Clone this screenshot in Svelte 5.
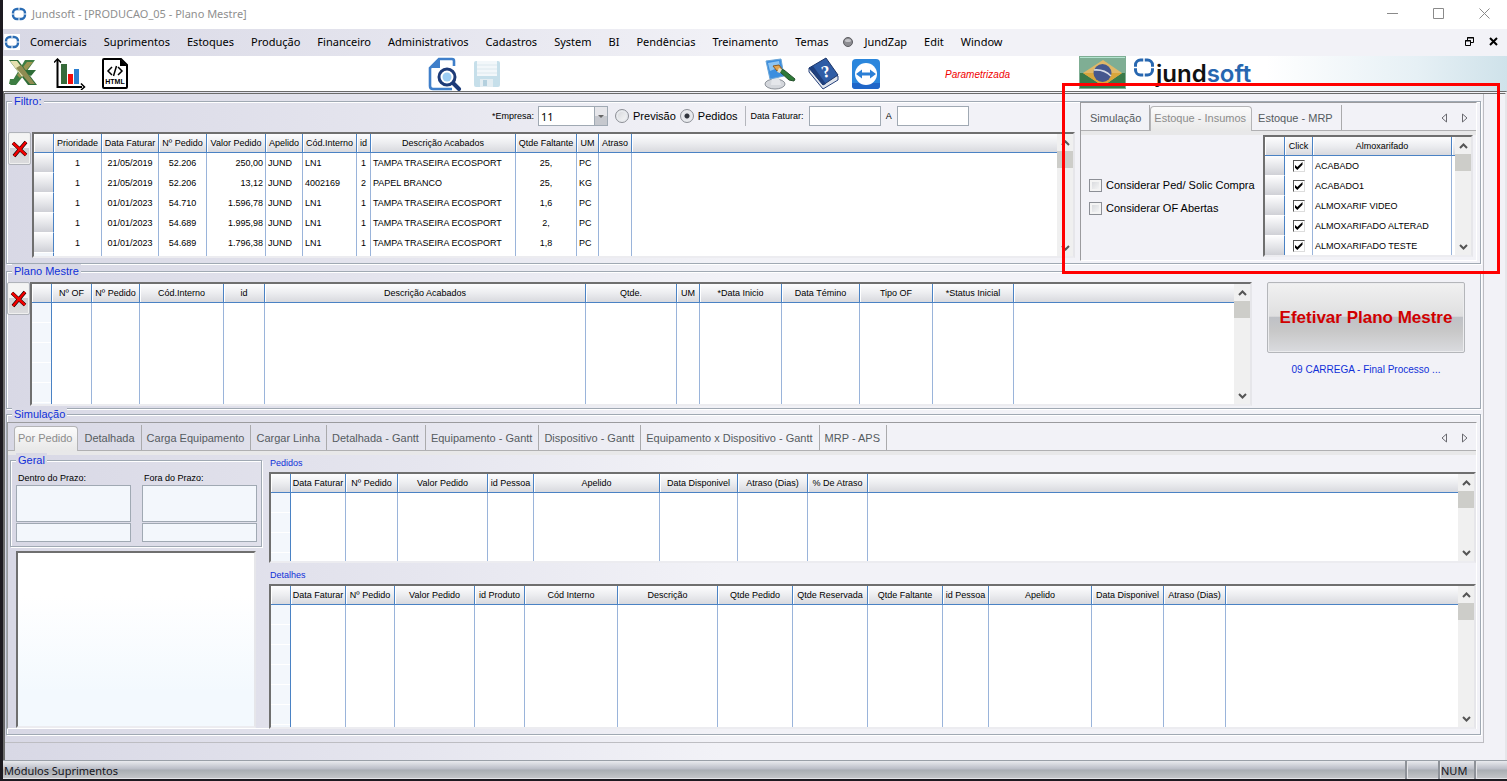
<script lang="ts">
  type Column = { label: string; width: number; align?: 'left' | 'center' | 'right' };

  const menus = [
    'Comerciais', 'Suprimentos', 'Estoques', 'Produção', 'Financeiro', 'Administrativos',
    'Cadastros', 'System', 'BI', 'Pendências', 'Treinamento', 'Temas', 'JundZap', 'Edit', 'Window'
  ];

  const filterTabs = ['Simulação', 'Estoque - Insumos', 'Estoque - MRP'];
  const simulationTabs = [
    'Por Pedido', 'Detalhada', 'Carga Equipamento', 'Cargar Linha', 'Detalhada - Gantt',
    'Equipamento - Gantt', 'Dispositivo - Gantt', 'Equipamento x Dispositivo - Gantt', 'MRP - APS'
  ];

  let filterTab = $state('Estoque - Insumos');
  let simulationTab = $state('Por Pedido');
  let orderKind = $state('pedidos');

  const orderColumns: Column[] = [
    { label: 'Prioridade', width: 48, align: 'center' },
    { label: 'Data Faturar', width: 57, align: 'center' },
    { label: 'Nº Pedido', width: 48, align: 'center' },
    { label: 'Valor Pedido', width: 59, align: 'right' },
    { label: 'Apelido', width: 37 },
    { label: 'Cód.Interno', width: 54 },
    { label: 'id', width: 14, align: 'center' },
    { label: 'Descrição Acabados', width: 145 },
    { label: 'Qtde Faltante', width: 61, align: 'center' },
    { label: 'UM', width: 22 },
    { label: 'Atraso', width: 33 }
  ];
  const orders = [
    ['1', '21/05/2019', '52.206', '250,00', 'JUND', 'LN1', '1', 'TAMPA TRASEIRA ECOSPORT', '25,', 'PC', ''],
    ['1', '21/05/2019', '52.206', '13,12', 'JUND', '4002169', '2', 'PAPEL BRANCO', '25,', 'KG', ''],
    ['1', '01/01/2023', '54.710', '1.596,78', 'JUND', 'LN1', '1', 'TAMPA TRASEIRA ECOSPORT', '1,6', 'PC', ''],
    ['1', '01/01/2023', '54.689', '1.995,98', 'JUND', 'LN1', '1', 'TAMPA TRASEIRA ECOSPORT', '2,', 'PC', ''],
    ['1', '01/01/2023', '54.689', '1.796,38', 'JUND', 'LN1', '1', 'TAMPA TRASEIRA ECOSPORT', '1,8', 'PC', '']
  ];

  const planColumns: Column[] = [
    { label: 'Nº OF', width: 40 },
    { label: 'Nº Pedido', width: 48 },
    { label: 'Cód.Interno', width: 84 },
    { label: 'id', width: 41 },
    { label: 'Descrição Acabados', width: 321 },
    { label: 'Qtde.', width: 91 },
    { label: 'UM', width: 23 },
    { label: '*Data Inicio', width: 82 },
    { label: 'Data Témino', width: 78 },
    { label: 'Tipo OF', width: 73 },
    { label: '*Status Inicial', width: 81 }
  ];

  const pedidosColumns: Column[] = [
    { label: 'Data Faturar', width: 55 },
    { label: 'Nº Pedido', width: 52 },
    { label: 'Valor Pedido', width: 90 },
    { label: 'id Pessoa', width: 46 },
    { label: 'Apelido', width: 126 },
    { label: 'Data Disponivel', width: 78 },
    { label: 'Atraso (Dias)', width: 70 },
    { label: '% De Atraso', width: 60 }
  ];

  const detalhesColumns: Column[] = [
    { label: 'Data Faturar', width: 55 },
    { label: 'Nº Pedido', width: 49 },
    { label: 'Valor Pedido', width: 80 },
    { label: 'id Produto', width: 50 },
    { label: 'Cód Interno', width: 93 },
    { label: 'Descrição', width: 100 },
    { label: 'Qtde Pedido', width: 75 },
    { label: 'Qtde Reservada', width: 75 },
    { label: 'Qtde Faltante', width: 75 },
    { label: 'id Pessoa', width: 46 },
    { label: 'Apelido', width: 103 },
    { label: 'Data Disponivel', width: 72 },
    { label: 'Atraso (Dias)', width: 62 }
  ];

  let warehouses = $state([
    { name: 'ACABADO', checked: true },
    { name: 'ACABADO1', checked: true },
    { name: 'ALMOXARIF VIDEO', checked: true },
    { name: 'ALMOXARIFADO ALTERAD', checked: true },
    { name: 'ALMOXARIFADO TESTE', checked: true }
  ]);
</script>

{#snippet ring(size: number)}
  <svg width={size} height={size} viewBox="0 0 16 16" aria-hidden="true">
    <rect x="2" y="3" width="12" height="10" rx="4" fill="none" stroke="#2a6cb4" stroke-width="2.4" />
    <path d="M8 1v3M8 12v3M0 8h3M13 8h3" stroke="#fff" stroke-width="1" />
  </svg>
{/snippet}

{#snippet scrollbar()}
  <div class="scrollbar">
    <button aria-label="Subir">
      <svg width="9" height="6" viewBox="0 0 9 6"><path d="M1 5l3.500-3.500L8 5" /></svg>
    </button>
    <div class="thumb"></div>
    <button aria-label="Descer">
      <svg width="9" height="6" viewBox="0 0 9 6"><path d="M1 1l3.500 3.500L8 1" /></svg>
    </button>
  </div>
{/snippet}

{#snippet grid(name: string, columns: Column[], rows: string[][])}
  <div class="grid {name}">
    <div class="viewport">
      <table aria-label={name}>
        <colgroup>
          <col class="selector" />
          {#each columns as column}
            <col style="width: {column.width}px" />
          {/each}
          <col />
        </colgroup>
        <thead>
          <tr>
            <th class="corner"></th>
            {#each columns as column}
              <th>{column.label}</th>
            {/each}
            <th class="rest"></th>
          </tr>
        </thead>
        <tbody>
          {#each rows as row}
            <tr>
              <th class="handle"></th>
              {#each row as cell, i}
                <td class={columns[i].align ?? 'left'}>{cell}</td>
              {/each}
              <td class="rest"></td>
            </tr>
          {/each}
          <tr class="blank">
            <td class="gutter"></td>
            {#each columns as _}
              <td></td>
            {/each}
            <td class="rest"></td>
          </tr>
        </tbody>
      </table>
    </div>
    {@render scrollbar()}
  </div>
{/snippet}

{#snippet deleteButton()}
  <button class="delete" aria-label="Excluir">
    <svg width="18" height="18" viewBox="0 0 18 18">
      <path d="M2 3l13 12M15 2L3 16" stroke="#000" stroke-width="3.600" />
      <path d="M2 3l13 12M15 2L3 16" stroke="#f20000" stroke-width="2.600" />
    </svg>
  </button>
{/snippet}

{#snippet tabArrows()}
  <div class="tab-arrows">
    <button aria-label="Aba anterior"><svg width="7" height="10" viewBox="0 0 7 10"><path d="M5.500 1v8L1 5z" /></svg></button>
    <button aria-label="Próxima aba"><svg width="7" height="10" viewBox="0 0 7 10"><path d="M1.500 1v8L6 5z" /></svg></button>
  </div>
{/snippet}

<div class="desktop">
  <div class="window">
    <header class="titlebar">
      {@render ring(16)}
      <h1>Jundsoft - [PRODUCAO_05 - Plano Mestre]</h1>
      <div class="window-buttons">
        <button aria-label="Minimizar"><svg width="11" height="11" viewBox="0 0 11 11"><path d="M0 5.500h11" /></svg></button>
        <button aria-label="Maximizar"><svg width="11" height="11" viewBox="0 0 11 11"><path d="M.5.500h10v10H.5z" /></svg></button>
        <button aria-label="Fechar"><svg width="11" height="11" viewBox="0 0 11 11"><path d="M.5.500l10 10M10.500.500l-10 10" /></svg></button>
      </div>
    </header>

    <nav class="menubar">
      <span class="menu-logo">{@render ring(16)}</span>
      {#each menus as menu}
        {#if menu === 'JundZap'}
          <svg class="dot" width="12" height="12" viewBox="0 0 12 12" aria-hidden="true">
            <circle cx="6" cy="6" r="4.500" fill="#8d8d92" stroke="#5d5d62" />
            <ellipse cx="6" cy="4.500" rx="3" ry="1.600" fill="#c4c4c8" />
          </svg>
        {/if}
        <button class="menu">{menu}</button>
      {/each}
      <div class="mdi-buttons">
        <button aria-label="Restaurar">
          <svg width="9" height="9" viewBox="0 0 9 9"><path d="M2.500 3V.5h6v5H6M2 1h7M.5 3.500h5v5h-5zM0 4h6" /></svg>
        </button>
        <button aria-label="Fechar janela">
          <svg width="9" height="9" viewBox="0 0 9 9"><path d="M1 1l7 7M8 1L1 8" stroke-width="2" /></svg>
        </button>
      </div>
    </nav>

    <div class="toolbar">
      <div class="tools reports">
        <button aria-label="Excel">
          <svg width="30" height="30" viewBox="0 0 30 30">
            <path d="M17 1h10L16 16 8 26H2z" fill="#3d7d42" />
            <path d="M19 3h6L12 19l-3-3z" fill="#9b9450" />
            <path d="M12 11l16 0-5 6z" fill="#2f6d38" />
            <path d="M1 1h9l19 25h-9z" fill="#2f6d38" />
            <path d="M2 2h7l9 12-4 4z" fill="#e5e0b0" />
            <path d="M8 9l5-3 14 19h-5z" fill="#8f8c52" />
            <path d="M2 20h9l-3 5H1z" fill="#3d7d42" />
          </svg>
        </button>
        <button aria-label="Gráfico">
          <svg width="32" height="32" viewBox="0 0 32 32">
            <path d="M7 6h6v20H7z" fill="#376b3a" />
            <path d="M14 16h5v10h-5z" fill="#f20c0c" />
            <path d="M20 11h5v15h-5z" fill="#2c7fd0" />
            <path d="M3.500 2v27H28" fill="none" stroke="#000" stroke-width="2" />
            <path d="M0 4.500L3.500 1 7 4.500M27 25.500l3.500 3.500-3.500 3" fill="none" stroke="#000" stroke-width="1.500" />
          </svg>
        </button>
        <button aria-label="HTML">
          <svg width="26" height="32" viewBox="0 0 26 32">
            <path d="M2 1h17l6 6v22a1 1 0 0 1-1 1H2a1 1 0 0 1-1-1V2a1 1 0 0 1 1-1z" fill="#fff" stroke="#000" stroke-width="2" />
            <path d="M18 1v7h7z" />
            <path d="M10 9l-4 4 4 4M16 9l4 4-4 4M14.500 8l-3 10" fill="none" stroke="#000" stroke-width="1.500" />
            <text x="13" y="26" text-anchor="middle" font-family="Liberation Sans, sans-serif" font-size="7" font-weight="700">HTML</text>
          </svg>
        </button>
      </div>
      <div class="tools record">
        <button aria-label="Pesquisar">
          <svg width="34" height="34" viewBox="0 0 34 34">
            <path d="M26 9V4q0-2-2-2H11L2 11v18q0 3 3 3h19" fill="none" stroke="#3f7fca" stroke-width="2.600" />
            <path d="M12 1v10H1z" fill="#3f7fca" />
            <path d="M25 26l6 6" stroke="#1d3b78" stroke-width="4" stroke-linecap="round" />
            <circle cx="19" cy="20" r="8" fill="#fff" stroke="#1d3b78" stroke-width="3" />
            <circle cx="19" cy="20" r="4.500" fill="#9ccdf4" />
          </svg>
        </button>
        <button aria-label="Salvar" disabled>
          <svg width="28" height="28" viewBox="0 0 28 28">
            <rect x="1" y="1" width="26" height="26" rx="2" fill="#c6dfea" />
            <path d="M4 1h20v15H4z" fill="#f2f7fa" />
            <path d="M4 5h20M4 9h20M4 13h20" stroke="#dce8ee" />
            <path d="M7 19h13v8H7z" fill="#e3edf2" />
            <path d="M10 20h4v6h-4z" fill="#b4d0de" />
          </svg>
        </button>
      </div>
      <div class="tools helpers">
        <button aria-label="Tema">
          <svg width="32" height="32" viewBox="0 0 32 32">
            <ellipse cx="11" cy="26" rx="10" ry="5" fill="#d4d7dc" stroke="#8c9199" />
            <path d="M8 19h7l2 8H7z" fill="#e4e6ea" />
            <path d="M2 3l15-2 3 17-14 3z" fill="#3c8ede" stroke="#6aa5d8" />
            <path d="M4 5l11-2 1 6-10 4z" fill="#8cc4f2" />
            <path d="M9 8l6-1 3 4-5 2z" fill="#e3a44e" stroke="#8b5a20" />
            <path d="M16 11l4 1 11 9-1 2-5-1-9-8z" fill="#2e7a38" stroke="#24502a" />
            <path d="M15 10l3 1-2 4-3-1z" fill="#e8dfc6" />
          </svg>
        </button>
        <button aria-label="Ajuda">
          <svg width="32" height="34" viewBox="0 0 32 34">
            <path d="M1 11v4l14 17 15-9v-4z" fill="#dfe4ec" stroke="#27427c" />
            <path d="M1 11L18 1l12 17-15 10z" fill="#2f5da6" stroke="#1b3468" />
            <path d="M1 11l4-2 13 18-3 1z" fill="#1e3f7d" />
            <text x="18" y="20" text-anchor="middle" transform="rotate(-14 18 15)" fill="#fff" font-family="Liberation Serif, serif" font-size="17" font-weight="700">?</text>
          </svg>
        </button>
        <button aria-label="Acesso remoto">
          <svg width="28" height="30" viewBox="0 0 28 30">
            <rect width="28" height="30" rx="4" fill="#2b86dc" />
            <path d="M0 24h28v3q0 3-3 3H3q-3 0-3-3z" fill="#1f66c8" />
            <circle cx="14" cy="15" r="11" fill="#fff" />
            <path d="M4 15l6-4.500v3h8v-3l6 4.500-6 4.500v-3h-8v3z" fill="#2b7fd6" />
          </svg>
        </button>
      </div>
      <em class="parametrized">Parametrizada</em>
      <div class="brand">
        <button class="flag" aria-label="Português (Brasil)">
          <svg width="47" height="33" viewBox="0 0 47 33">
            <rect width="47" height="33" fill="#7fae94" />
            <rect x="1" y="17" width="45" height="15" fill="#3a7a4a" />
            <path d="M1 1.500h45" stroke="#b4e4d0" />
            <path d="M24 4l19 13-19 13L4 17z" fill="#e0b868" />
            <path d="M4 17h39L24 30z" fill="#d9a63c" />
            <circle cx="23.500" cy="17" r="9" fill="#46588e" />
            <path d="M15 14q10-1 17 6" fill="none" stroke="#d8dde8" stroke-width="1.500" />
          </svg>
        </button>
        <svg class="brand-mark" width="20" height="20" viewBox="0 0 20 20" aria-hidden="true">
          <rect x="1.500" y="2" width="17" height="15" rx="5" fill="none" stroke="#2767b0" stroke-width="3" />
          <path d="M10 0v5M10 14v6M0 9.500h4M16 9.500h4" stroke="#fff" stroke-width="1.500" />
        </svg>
        <span class="wordmark">jund<b>soft</b></span>
      </div>
    </div>

    <main>
      <div class="form">
        <section class="group filter">
          <h2>Filtro:</h2>
          <div class="filter-left">
            <div class="controls">
              <label for="empresa">*Empresa:</label>
              <div class="combo">
                <select id="empresa"><option>11</option></select>
                <span class="combo-arrow"></span>
              </div>
              <label class="option first"><input type="radio" name="tipo" value="previsao" bind:group={orderKind} />Previsão</label>
              <label class="option"><input type="radio" name="tipo" value="pedidos" bind:group={orderKind} />Pedidos</label>
              <div class="dates">
                <label for="data-inicial">Data Faturar:</label>
                <input id="data-inicial" type="text" />
                <label for="data-final">A</label>
                <input id="data-final" type="text" />
              </div>
            </div>
            <div class="grid-row">
              {@render deleteButton()}
              {@render grid('orders', orderColumns, orders)}
            </div>
          </div>

          <div class="tab-panel stock">
            <div class="tabs" role="tablist">
              {#each filterTabs as tab}
                <button role="tab" class:active={tab === filterTab} aria-selected={tab === filterTab} onclick={() => (filterTab = tab)}>{tab}</button>
              {/each}
              {@render tabArrows()}
            </div>
            <div class="page">
              <div class="checks">
                <label class="option"><input type="checkbox" />Considerar Ped/ Solic Compra</label>
                <label class="option"><input type="checkbox" />Considerar OF Abertas</label>
              </div>
              <div class="grid warehouses">
                <div class="viewport">
                  <table aria-label="Almoxarifados">
                    <colgroup>
                      <col class="selector" />
                      <col class="click" />
                      <col class="warehouse" />
                      <col />
                    </colgroup>
                    <thead>
                      <tr><th class="corner"></th><th>Click</th><th>Almoxarifado</th><th class="rest"></th></tr>
                    </thead>
                    <tbody>
                      {#each warehouses as warehouse}
                        <tr>
                          <th class="handle"></th>
                          <td class="center"><input type="checkbox" aria-label={warehouse.name} bind:checked={warehouse.checked} /></td>
                          <td>{warehouse.name}</td>
                          <td class="rest"></td>
                        </tr>
                      {/each}
                    </tbody>
                  </table>
                </div>
                {@render scrollbar()}
              </div>
            </div>
          </div>
        </section>

        <section class="group plan">
          <h2>Plano Mestre</h2>
          <div class="grid-row">
            {@render deleteButton()}
            {@render grid('plan-items', planColumns, [])}
          </div>
          <div class="commit">
            <button class="commit-button">Efetivar Plano Mestre</button>
            <p>09 CARREGA - Final Processo ...</p>
          </div>
        </section>

        <section class="group simulation">
          <h2>Simulação</h2>
          <div class="tab-panel">
            <div class="tabs" role="tablist">
              {#each simulationTabs as tab}
                <button role="tab" class:active={tab === simulationTab} aria-selected={tab === simulationTab} onclick={() => (simulationTab = tab)}>{tab}</button>
              {/each}
              {@render tabArrows()}
            </div>
            <div class="page">
              <div class="summary">
                <div class="group general">
                  <h2>Geral</h2>
                  <div class="totals">
                    <label for="dentro">Dentro do Prazo:</label>
                    <input id="dentro" class="tall" type="text" readonly />
                    <input aria-label="Percentual dentro do prazo" type="text" readonly />
                  </div>
                  <div class="totals">
                    <label for="fora">Fora do Prazo:</label>
                    <input id="fora" class="tall" type="text" readonly />
                    <input aria-label="Percentual fora do prazo" type="text" readonly />
                  </div>
                </div>
                <div class="chart"></div>
              </div>
              <div class="results">
                <h3>Pedidos</h3>
                {@render grid('pedidos', pedidosColumns, [])}
                <h3>Detalhes</h3>
                {@render grid('detalhes', detalhesColumns, [])}
              </div>
            </div>
          </div>
        </section>
      </div>
    </main>

    <footer class="statusbar">
      <span class="status-text">Módulos Suprimentos</span>
      <span class="status-cell"></span>
      <span class="status-cell num">NUM</span>
      <span class="status-cell"></span>
    </footer>

    <div class="highlight"></div>
  </div>
</div>

<style>
  :global(body) {
    margin: 0;
  }

  .desktop {
    --ui: 'Noto Sans', sans-serif;
    --frame: #a0a9b3;
    --blue: #4a82c4;
    box-sizing: border-box;
    min-height: 100vh;
    padding: 0 0 2px 3px;
    display: flex;
    background: #1d1a20;
    font-family: 'Liberation Sans', sans-serif;
    font-size: 9px;
    color: #000;
  }

  .desktop :global(*) {
    box-sizing: border-box;
  }

  button,
  input,
  select {
    font: inherit;
    color: inherit;
    margin: 0;
    padding: 0;
  }

  button {
    border: 0;
    background: none;
  }

  svg {
    display: block;
  }

  .window {
    position: relative;
    flex: 1;
    min-width: 0;
    display: flex;
    flex-direction: column;
    background: #fff;
  }

  /* title and menu */
  .titlebar {
    height: 29px;
    padding: 0 12px 2px 8px;
    display: flex;
    align-items: center;
    gap: 5px;
    font-family: var(--ui);
  }

  h1 {
    margin: 0;
    flex: 1;
    font-size: 11px;
    font-weight: 400;
    color: #8f8f8f;
  }

  .window-buttons {
    display: flex;
    gap: 35px;
    margin-right: 5px;
  }

  .window-buttons path {
    fill: none;
    stroke: #8a8a8a;
  }

  .menubar {
    height: 27px;
    padding-bottom: 2px;
    display: flex;
    align-items: center;
    background: linear-gradient(90deg, #d8d8e5, #e6e6ef 30%, #f2f2f7 50%);
    font-family: var(--ui);
  }

  .menu-logo {
    margin: 0 10px 0 1px;
    background: #fff;
  }

  .menu {
    font-size: 11px;
    line-height: 16px;
    margin-right: 17px;
  }

  .dot {
    margin: 0 11px 0 -4px;
  }

  .mdi-buttons {
    margin-left: auto;
    padding-right: 9px;
    display: flex;
    gap: 15px;
  }

  .mdi-buttons path {
    fill: none;
    stroke: #000;
  }

  /* toolbar */
  .toolbar {
    height: 35px;
    padding-left: 5px;
    display: grid;
    grid-template-columns: 420px 336px 181px 134px 1fr;
    align-items: center;
    background: linear-gradient(90deg, #fff 84%, #e6f0f5 94%, #cfe2ea);
  }

  .tools {
    display: flex;
    align-items: center;
  }

  .reports {
    gap: 16px;
  }

  .record {
    gap: 11px;
  }

  .helpers {
    gap: 12px;
  }

  .parametrized {
    font-size: 10px;
    color: #f00000;
  }

  .brand {
    display: flex;
    align-items: flex-start;
  }

  .brand-mark {
    margin: 2px 2px 0 8px;
  }

  .wordmark {
    font-family: Inter, sans-serif;
    font-size: 24px;
    line-height: 36px;
    font-weight: 600;
    color: #111;
  }

  .wordmark b {
    font-weight: 600;
    color: #2767b0;
  }

  /* workspace */
  main {
    flex: 1;
    padding-right: 21px;
    border: solid #6b6b6b;
    border-width: 3px 2px 0 2px;
    border-top-style: double;
    border-right-color: #e6e6ea;
    background: linear-gradient(90deg, #d8d8e5, #e6e6ef 28%, #f2f2f7 48%);
  }

  .form {
    padding: 7px 2px 7px 1px;
    border-right: 1px solid #bdbdc2;
    border-bottom: 1px solid #bdbdc2;
  }

  .group {
    position: relative;
    display: flex;
    border: 1px solid var(--frame);
    box-shadow: 1px 1px 0 #fff, inset 1px 1px 0 #fff;
  }

  .group > h2 {
    position: absolute;
    top: -8px;
    left: 5px;
    margin: 0;
    padding: 0 2px;
    background: #d9d9e6;
    font-size: 11px;
    line-height: 14px;
    font-weight: 400;
    color: #1030d8;
  }

  .filter {
    height: 163px;
    margin-bottom: 7px;
  }

  .plan {
    height: 138px;
    margin-bottom: 5px;
  }

  .simulation {
    height: 321px;
  }

  .filter-left {
    flex: 1;
    min-width: 0;
    padding: 0 5px 0 1px;
  }

  .controls {
    height: 30px;
    padding: 0 0 2px 484px;
    display: flex;
    align-items: center;
  }

  .combo {
    position: relative;
    margin-left: 4px;
  }

  select {
    appearance: none;
    display: block;
    width: 70px;
    height: 20px;
    padding: 0 2px;
    border: 1px solid var(--frame);
    border-radius: 0;
    background: #fff;
    font-family: var(--ui);
    font-size: 11px;
  }

  .combo-arrow {
    position: absolute;
    inset: 1px 1px 1px auto;
    width: 13px;
    display: grid;
    place-items: center;
    border-left: 1px solid var(--frame);
    background: linear-gradient(#e6e6ea 50%, #c6c8ce 50%);
    pointer-events: none;
  }

  .combo-arrow::before {
    content: '';
    border: 3px solid transparent;
    border-top-color: #666;
    border-bottom: 0;
  }

  .option {
    display: flex;
    align-items: center;
    gap: 4px;
    margin-right: 4px;
    font-size: 11px;
    line-height: 16px;
    white-space: nowrap;
  }

  .option.first {
    margin-left: 7px;
  }

  .option input {
    appearance: none;
    width: 13px;
    height: 13px;
    border: 1px solid #8c8f96;
    background: linear-gradient(135deg, #d2d4d8, #fbfbfb);
    box-shadow: inset 0 0 0 2px #f4f4f4;
  }

  .option input[type='radio'] {
    width: 14px;
    height: 14px;
    border-radius: 50%;
    box-shadow: inset 0 0 0 2px #e8eaee;
  }

  .option input[type='radio']:checked {
    background: radial-gradient(circle, #30343c 2px, #e4e6ea 3px);
  }

  .dates {
    display: flex;
    align-items: center;
    gap: 5px;
    height: 20px;
    margin-left: 3px;
    padding-left: 5px;
    border-left: 1px solid #b4b6bc;
  }

  .dates input {
    width: 72px;
    height: 20px;
    border: 1px solid var(--frame);
    background: #fff;
  }

  .grid-row {
    display: flex;
    align-items: flex-start;
    gap: 1px;
  }

  .delete {
    width: 23px;
    height: 33px;
    display: grid;
    place-items: center;
    border: 1px solid #b0b3ba;
    border-radius: 2px;
    background: linear-gradient(#f4f4f4 48%, #cfd0d3 50%, #dcdcde);
    box-shadow: inset 0 0 0 1px #f0f0f0;
  }

  /* data grids */
  .grid {
    flex: 1;
    min-width: 0;
    display: flex;
    border: 2px solid;
    border-color: #6f6f6f #e6e6ea #ececf0 #6f6f6f;
    background: #fff;
  }

  .viewport {
    flex: 1;
    min-width: 0;
    overflow: hidden;
  }

  .orders {
    height: 126px;
  }

  .plan-items {
    height: 124px;
  }

  table {
    width: 100%;
    table-layout: fixed;
    border-collapse: separate;
    border-spacing: 0;
    white-space: nowrap;
  }

  col.selector {
    width: 20px;
  }

  col.click {
    width: 28px;
  }

  col.warehouse {
    width: 139px;
  }

  th,
  td {
    height: 20px;
    padding: 0 2px;
    overflow: hidden;
    border-right: 1px solid #9ab4da;
    font-weight: 400;
    line-height: 14px;
    text-align: left;
  }

  thead th {
    height: 19px;
    padding: 0;
    border-right-color: var(--blue);
    border-bottom: 1px solid var(--blue);
    background: linear-gradient(#fdfdfe, #ecedf0 50%, #d8d9de);
    box-shadow: inset 1px 0 0 #fff;
    text-align: center;
  }

  th.rest,
  td.rest {
    border-right: 0;
  }

  .handle {
    border-right-color: var(--blue);
    border-bottom: 1px solid #fff;
    background: linear-gradient(#fdfdfe, #e2e3e7 60%, #cfd0d6);
  }

  .center {
    text-align: center;
  }

  .right {
    text-align: right;
  }

  .blank td {
    height: 160px;
  }

  .blank .gutter {
    border-right-color: var(--blue);
    background: repeating-linear-gradient(#f3f7fc 0 19px, #fff 19px 20px);
  }

  .scrollbar {
    width: 16px;
    display: flex;
    flex-direction: column;
    background: #f0f0f0;
  }

  .scrollbar button {
    height: 17px;
    display: grid;
    place-items: center;
  }

  .scrollbar button:last-child {
    margin-top: auto;
  }

  .scrollbar path {
    fill: none;
    stroke: #555;
    stroke-width: 2;
  }

  .thumb {
    height: 17px;
    background: #cdcdc9;
  }

  /* tabbed panels */
  .tab-panel {
    flex: 1;
    min-width: 0;
    display: flex;
    flex-direction: column;
    border: 1px solid #9b9b9e;
    border-right-color: #fff;
    border-bottom-color: #fff;
  }

  .tabs {
    height: 28px;
    padding: 2px 0 0 6px;
    display: flex;
    flex: none;
    border-bottom: 1px solid #b0b0b2;
  }

  .tabs > button {
    padding: 0 6px 0 5px;
    border-right: 1px solid #aaaaac;
    font-size: 11px;
    color: #555b60;
    white-space: nowrap;
  }

  .tabs > button.active {
    margin: 1px 1px -1px 0;
    padding: 0 5px 2px 3px;
    border: 1px solid #b4b4b6;
    border-bottom: 0;
    border-radius: 4px 4px 0 0;
    background: linear-gradient(#fbfbfb, #e8e8e8);
    color: #8c8c8c;
  }

  .tab-arrows {
    margin-left: auto;
    padding-right: 8px;
    display: flex;
    gap: 13px;
  }

  .tab-arrows path {
    fill: none;
    stroke: #6a6a70;
  }

  .page {
    flex: 1;
    display: flex;
    border-top: 4px solid #e8e8e9;
  }

  .stock {
    flex: none;
    width: 397px;
    height: 159px;
    margin-right: 3px;
  }

  .stock .tabs {
    padding-left: 4px;
  }

  .stock .tabs > button {
    padding-right: 8px;
  }

  .stock .tabs > button.active {
    padding-right: 5px;
  }

  .checks {
    flex: 1;
    padding: 0 0 2px 8px;
    display: flex;
    flex-direction: column;
    justify-content: center;
    gap: 7px;
  }

  .warehouses {
    flex: none;
    width: 210px;
    height: 122px;
    margin-right: 3px;
  }

  td input[type='checkbox'] {
    appearance: none;
    display: grid;
    place-items: center;
    width: 12px;
    height: 12px;
    margin: 0 auto;
    border: 1px solid;
    border-color: #555 #ddd #ddd #555;
    background: #fff;
  }

  td input[type='checkbox']:checked::before {
    content: '';
    width: 8px;
    height: 8px;
    background: #000;
    clip-path: polygon(0 30%, 35% 62%, 100% 0, 100% 35%, 35% 100%, 0 65%);
  }

  .plan {
    justify-content: space-between;
    padding: 10px 15px 0 0;
  }

  .plan .grid-row {
    flex: 1;
    min-width: 0;
    gap: 0;
  }

  .commit {
    flex: none;
    width: 198px;
    margin-left: 15px;
    text-align: center;
  }

  .commit-button {
    width: 100%;
    height: 71px;
    border: 1px solid #b4b6ba;
    border-radius: 2px;
    background: linear-gradient(#f1f1f1, #dfdfe0 48%, #bfc1c6 50%, #c8c8c8 70%, #dadbdf);
    box-shadow: inset 0 0 0 1px #ececee;
    font-size: 17px;
    font-weight: 700;
    color: #d00000;
  }

  .commit p {
    margin: 9px 0 0;
    font-size: 10px;
    line-height: 16px;
    color: #1030d8;
  }

  .simulation {
    padding: 7px 3px 5px 0;
  }

  .summary {
    width: 252px;
    flex: none;
    margin: 5px 7px 0 2px;
  }

  .general {
    height: 87px;
    padding: 0 4px 0 5px;
    justify-content: space-between;
  }

  .totals {
    width: 115px;
    padding-top: 11px;
    display: flex;
    flex-direction: column;
  }

  .totals label {
    padding-left: 2px;
    line-height: 13px;
  }

  .totals input {
    width: 100%;
    height: 19px;
    border: 1px solid var(--frame);
    background: #f3f7fc;
  }

  .totals .tall {
    height: 37px;
    margin-bottom: 1px;
  }

  .chart {
    height: 177px;
    margin: 4px 6px 0;
    border: 2px solid;
    border-color: #6f6f6f #e6e6ea #ececf0 #6f6f6f;
    background: linear-gradient(#fff 25%, #f3f9fe 80%);
  }

  .results {
    flex: 1;
    min-width: 0;
  }

  h3 {
    margin: 0;
    padding: 1px 0 2px 1px;
    font-size: 9px;
    line-height: 14px;
    font-weight: 400;
    color: #1030d8;
  }

  .pedidos {
    height: 91px;
    margin-bottom: 4px;
  }

  .detalhes {
    height: 145px;
  }

  /* status bar */
  .statusbar {
    height: 19px;
    display: flex;
    border-top: 1px solid #9aa0a8;
    background: linear-gradient(#e9eaee, #b9bcc6 45%, #a9adb2 50%, #c6c7ca);
    box-shadow: inset 0 -1px 0 #e4e4e8;
    font-family: var(--ui);
    font-size: 11px;
    line-height: 19px;
    color: #141420;
  }

  .status-text {
    flex: 1;
    padding-left: 1px;
  }

  .status-cell {
    width: 33px;
    border-left: 2px solid #8d9198;
    box-shadow: inset 1px 0 0 #e4e4e8;
  }

  .num {
    width: 36px;
    padding-left: 1px;
  }

  .highlight {
    position: absolute;
    top: 83px;
    right: 7px;
    width: 438px;
    height: 191px;
    border: 3px solid #f00;
    pointer-events: none;
  }
</style>
